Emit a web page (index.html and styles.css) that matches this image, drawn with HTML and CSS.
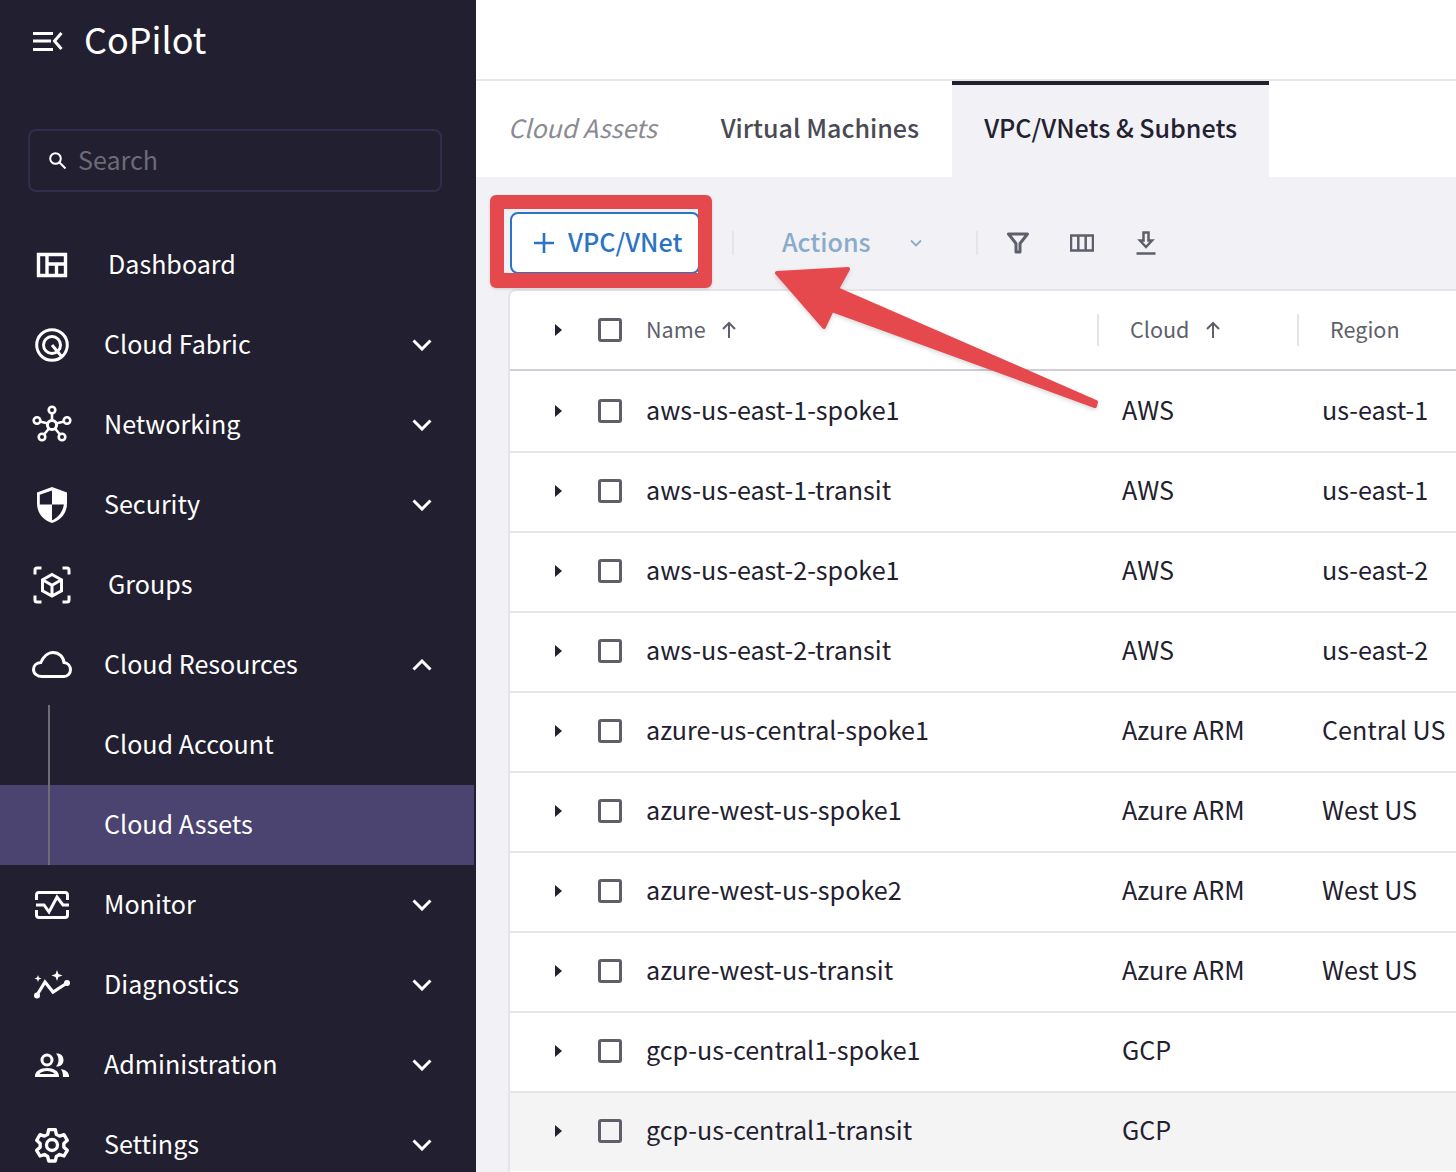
FILE: index.html
```html
<!doctype html>
<html lang="en">
  <head>
    <meta charset="UTF-8" />
    <meta name="viewport" content="width=device-width, initial-scale=1.0" />
    <title>CoPilot</title>
    <link rel="stylesheet" href="styles.css">
  </head>
  <body>
    <aside class="sidebar">
      <div class="brand">
        <svg class="brand-icon" viewBox="0 0 32 24" fill="none" stroke="#fff" stroke-width="3">
          <path d="M1 5.500h20M1 13h18M1 21.500h20" />
          <path d="M29.500 5l-7 8 7 8" stroke-width="3" />
        </svg>
        <span class="brand-name">CoPilot</span>
      </div>

      <div class="search">
        <svg class="search-icon" viewBox="0 0 17 17" fill="none" stroke="#fff" stroke-width="2">
          <circle cx="6.500" cy="6.500" r="5.300" />
          <path d="M10.500 10.500l6 6" />
        </svg>
        <span class="search-text">Search</span>
      </div>

      <nav class="nav">
        <a class="nav-item nav-item-wide">
          <svg class="nav-icon" viewBox="0 0 40 40" fill="none" stroke="#fff" stroke-width="3.400">
            <path d="M6.500 9.500h27v21h-27zM15 9.500v21M15 19h18.500M24.500 19v11.500" />
          </svg>
          <span>Dashboard</span>
        </a>
        <a class="nav-item">
          <svg class="nav-icon" viewBox="0 0 40 40" fill="none" stroke="#fff" stroke-width="3">
            <circle cx="20" cy="20" r="15.300" />
            <circle cx="20" cy="20" r="8.500" />
            <path d="M20 20l10 12" />
          </svg>
          <span>Cloud Fabric</span>
          <svg class="chevron" viewBox="0 0 20 12" fill="none" stroke="#fff" stroke-width="3"><path d="M1.500 1.500l8.500 8.500 8.500-8.500" /></svg>
        </a>
        <a class="nav-item">
          <svg class="nav-icon" viewBox="0 0 40 40" fill="none" stroke="#fff" stroke-width="2.600">
            <circle cx="20" cy="20" r="4.600" stroke-width="3" />
            <circle cx="20" cy="5" r="3.300" />
            <circle cx="5" cy="15.500" r="3.300" />
            <circle cx="35" cy="15.500" r="3.300" />
            <circle cx="10" cy="32" r="3.300" />
            <circle cx="30" cy="32" r="3.300" />
            <path d="M20 8.500v7M8 16.500l8 2M32 16.500l-8 2M12 29.500l5-6M28 29.500l-5-6" />
          </svg>
          <span>Networking</span>
          <svg class="chevron" viewBox="0 0 20 12" fill="none" stroke="#fff" stroke-width="3"><path d="M1.500 1.500l8.500 8.500 8.500-8.500" /></svg>
        </a>
        <a class="nav-item">
          <svg class="nav-icon" viewBox="0 0 40 40">
            <path fill="#fff" d="M20 2L5 7.500v11C5 28 11.500 35.500 20 38c8.500-2.500 15-10 15-19.500v-11z" />
            <path fill="#221f30" d="M20 5.500L7.800 9.800v9.700H20zM20 19.500v15.700c5.800-2.200 10.800-8.200 11.900-15.700z" />
          </svg>
          <span>Security</span>
          <svg class="chevron" viewBox="0 0 20 12" fill="none" stroke="#fff" stroke-width="3"><path d="M1.500 1.500l8.500 8.500 8.500-8.500" /></svg>
        </a>
        <a class="nav-item nav-item-wide">
          <svg class="nav-icon" viewBox="0 0 40 40" fill="none" stroke="#fff" stroke-width="3">
            <path d="M3 9.500V5q0-2 2-2h4.500M30.500 3H35q2 0 2 2v4.500M3 30.500V35q0 2 2 2h4.500M30.500 37H35q2 0 2-2v-4.500" />
            <path d="M20 9.500l9.500 5.300v11L20 31l-9.500-5.200v-11zM10.500 14.800l9.500 5.400 9.500-5.400M20 20.200V31" />
          </svg>
          <span>Groups</span>
        </a>
        <a class="nav-item">
          <svg class="nav-icon" viewBox="0 0 40 40" fill="none" stroke="#fff" stroke-width="3">
            <path d="M10 31.500c-4.500 0-8.500-2.800-8.500-7 0-4 3.200-6.800 7.300-7C11 12.500 15.500 7.500 21 7.500c6 0 10.500 4.500 11 10 3.800.5 6.500 3.500 6.500 7.300 0 3.700-3 6.700-6.500 6.700z" />
          </svg>
          <span>Cloud Resources</span>
          <svg class="chevron" viewBox="0 0 20 12" fill="none" stroke="#fff" stroke-width="3"><path d="M1.500 10.500l8.500-8.500 8.500 8.500" /></svg>
        </a>
        <div class="subnav">
          <a class="nav-item sub-item">Cloud Account</a>
          <a class="nav-item sub-item sub-item-active">Cloud Assets</a>
        </div>
        <a class="nav-item">
          <svg class="nav-icon" viewBox="0 0 40 40" fill="none" stroke="#fff" stroke-width="3">
            <path d="M4.500 15V10q0-2.500 2.500-2.500h26q2.500 0 2.500 2.500v5M4.500 25v5q0 2.500 2.500 2.500h26q2.500 0 2.500-2.500v-5" />
            <path d="M4 20h8l5 7 8-15 6 8h6" />
          </svg>
          <span>Monitor</span>
          <svg class="chevron" viewBox="0 0 20 12" fill="none" stroke="#fff" stroke-width="3"><path d="M1.500 1.500l8.500 8.500 8.500-8.500" /></svg>
        </a>
        <a class="nav-item">
          <svg class="nav-icon" viewBox="0 0 40 40" fill="none" stroke="#fff" stroke-width="3.200">
            <path d="M5 30l8-13 8 10 14-9" />
            <circle cx="5" cy="30.500" r="3" fill="#fff" stroke="none" />
            <circle cx="35" cy="18" r="3" fill="#fff" stroke="none" />
            <path fill="#fff" stroke="none" d="M25 5l1.400 4.100 4.100 1.400-4.100 1.400L25 16l-1.400-4.100-4.100-1.400 4.100-1.400zM6 10l.9 2.600 2.600.9-2.600.9L6 17l-.9-2.600-2.600-.9 2.600-.9z" />
          </svg>
          <span>Diagnostics</span>
          <svg class="chevron" viewBox="0 0 20 12" fill="none" stroke="#fff" stroke-width="3"><path d="M1.500 1.500l8.500 8.500 8.500-8.500" /></svg>
        </a>
        <a class="nav-item">
          <svg class="nav-icon" viewBox="0 0 40 40">
            <circle cx="15" cy="15" r="5" fill="none" stroke="#fff" stroke-width="3" />
            <path fill="#fff" d="M3 32v-1c0-5 5.500-8 12-8s12 3 12 8v1zm4.500-3h15c-1-1.600-4-3-7.500-3s-6.500 1.400-7.500 3z" />
            <path fill="#fff" d="M24 8.500c4.500-.5 7.500 2.200 7.500 6.500s-3 7-7.500 6.500c1.700-1.700 2.500-4 2.500-6.500s-.8-4.800-2.500-6.500zM29 24c4.500.8 8 3.300 8 7v1h-6c0-3-.5-5.500-2-8z" />
          </svg>
          <span>Administration</span>
          <svg class="chevron" viewBox="0 0 20 12" fill="none" stroke="#fff" stroke-width="3"><path d="M1.500 1.500l8.500 8.500 8.500-8.500" /></svg>
        </a>
        <a class="nav-item">
          <svg class="nav-icon" viewBox="0 0 24 24" fill="none" stroke="#fff" stroke-width="2" stroke-linejoin="round">
            <circle cx="12" cy="12" r="3.300" />
            <path d="M10 2.800h4l.6 2.800 1.900 1.100 2.700-.9 2 3.400-2.100 1.900v2.200l2.100 1.900-2 3.400-2.700-.9-1.900 1.100-.6 2.800h-4l-.6-2.800-1.900-1.100-2.700.9-2-3.400 2.100-1.900v-2.200L2.800 9.200l2-3.400 2.700.9 1.900-1.100z" />
          </svg>
          <span>Settings</span>
          <svg class="chevron" viewBox="0 0 20 12" fill="none" stroke="#fff" stroke-width="3"><path d="M1.500 1.500l8.500 8.500 8.500-8.500" /></svg>
        </a>
      </nav>
    </aside>

    <main class="content">
      <div class="topbar"></div>
      <div class="tabs">
        <a class="tab tab-crumb">Cloud Assets</a>
        <a class="tab tab-vm">Virtual Machines</a>
        <a class="tab tab-active">VPC/VNets &amp; Subnets</a>
      </div>

      <div class="panel">
        <div class="toolbar">
          <button class="add-button">
            <svg viewBox="0 0 20 20" fill="none" stroke="#2b74c4" stroke-width="2.600"><path d="M10 0v20M0 10h20" /></svg>
            <span class="add-label">VPC/VNet</span>
          </button>
          <span class="toolbar-sep sep-first"></span>
          <span class="actions">Actions</span>
          <svg class="actions-chevron" viewBox="0 0 12 8" fill="none" stroke="#8aabc9" stroke-width="1.800"><path d="M1 1.500l5 5 5-5" /></svg>
          <span class="toolbar-sep sep-second"></span>
          <svg class="tool-icon" viewBox="0 0 24 24" fill="none" stroke="#5f5f6b" stroke-width="3"><path d="M2.500 3h19L14 12.500V21h-4v-8.500z" stroke-linejoin="round" /></svg>
          <svg class="tool-icon" viewBox="0 0 24 24" fill="none" stroke="#5f5f6b" stroke-width="2.500"><path d="M1 4.500h22v15H1zM8.300 4.500v15M15.700 4.500v15" /></svg>
          <svg class="tool-icon" viewBox="0 0 24 24" fill="none" stroke="#5f5f6b" stroke-width="2.500"><path d="M9.500 1.500h5v8h3.500L12 16 6 9.500h3.500zM2.500 22.500h19" /></svg>
        </div>

        <div class="table">
          <div class="row row-head">
            <span class="caret"></span>
            <span class="checkbox"></span>
            <span class="cell-name head-name"><span class="head-label">Name</span><svg class="sort" viewBox="0 0 16 18" fill="none" stroke="#5f5f6b" stroke-width="2"><path d="M8 17V2M2 8l6-6 6 6" /></svg></span>
            <span class="cell-cloud head-cell"><span class="head-label">Cloud</span><svg class="sort" viewBox="0 0 16 18" fill="none" stroke="#5f5f6b" stroke-width="2"><path d="M8 17V2M2 8l6-6 6 6" /></svg></span>
            <span class="cell-region head-cell"><span class="head-label">Region</span></span>
          </div>
          <div class="row"><span class="caret"></span><span class="checkbox"></span><span class="cell-name">aws-us-east-1-spoke1</span><span class="cell-cloud">AWS</span><span class="cell-region">us-east-1</span></div>
          <div class="row"><span class="caret"></span><span class="checkbox"></span><span class="cell-name">aws-us-east-1-transit</span><span class="cell-cloud">AWS</span><span class="cell-region">us-east-1</span></div>
          <div class="row"><span class="caret"></span><span class="checkbox"></span><span class="cell-name">aws-us-east-2-spoke1</span><span class="cell-cloud">AWS</span><span class="cell-region">us-east-2</span></div>
          <div class="row"><span class="caret"></span><span class="checkbox"></span><span class="cell-name">aws-us-east-2-transit</span><span class="cell-cloud">AWS</span><span class="cell-region">us-east-2</span></div>
          <div class="row"><span class="caret"></span><span class="checkbox"></span><span class="cell-name">azure-us-central-spoke1</span><span class="cell-cloud">Azure ARM</span><span class="cell-region">Central US</span></div>
          <div class="row"><span class="caret"></span><span class="checkbox"></span><span class="cell-name">azure-west-us-spoke1</span><span class="cell-cloud">Azure ARM</span><span class="cell-region">West US</span></div>
          <div class="row"><span class="caret"></span><span class="checkbox"></span><span class="cell-name">azure-west-us-spoke2</span><span class="cell-cloud">Azure ARM</span><span class="cell-region">West US</span></div>
          <div class="row"><span class="caret"></span><span class="checkbox"></span><span class="cell-name">azure-west-us-transit</span><span class="cell-cloud">Azure ARM</span><span class="cell-region">West US</span></div>
          <div class="row"><span class="caret"></span><span class="checkbox"></span><span class="cell-name">gcp-us-central1-spoke1</span><span class="cell-cloud">GCP</span><span class="cell-region"></span></div>
          <div class="row row-hover"><span class="caret"></span><span class="checkbox"></span><span class="cell-name">gcp-us-central1-transit</span><span class="cell-cloud">GCP</span><span class="cell-region"></span></div>
        </div>
      </div>
    </main>

    <!-- red annotation drawn over the screenshot -->
    <div class="callout-box"></div>
    <svg class="callout-arrow" viewBox="0 0 1456 1172">
      <path fill="#e6494d" stroke="#e6494d" stroke-width="4" stroke-linejoin="round" d="M777 273L848 269 837 289 1096 402 1095 406 832 310 824 327z" />
    </svg>
  </body>
</html>
```

FILE: styles.css
```css
html, body {
  height: 100%;
}
body {
  margin: 0;
  padding: 0;
  display: flex;
  height: 1172px;
  overflow: hidden;
  font-family: "Noto Sans CJK SC", "Noto Sans", sans-serif;
  font-size: 25.100px;
  color: #23202f;
  background: #fff;
}

/* Sidebar */
.sidebar {
  width: 476px;
  flex-shrink: 0;
  background: #221f30;
  color: #fff;
}
.brand {
  display: flex;
  align-items: center;
  height: 80px;
  padding-left: 32px;
}
.brand-icon {
  width: 32px;
  height: 24px;
}
.brand-name {
  margin-left: 20px;
  padding-bottom: 4px;
  font-size: 36px;
  line-height: 1;
}
.search {
  display: flex;
  align-items: center;
  height: 63px;
  margin: 49px 34px 0 28px;
  padding-left: 19px;
  box-sizing: border-box;
  border: 2px solid #322d4a;
  border-radius: 8px;
  color: #6d6a78;
}
.search-icon {
  width: 17px;
  height: 17px;
  margin-right: 12px;
}
.search-text {
  padding-bottom: 4px;
}
.nav {
  margin-top: 33px;
}
.nav-item {
  display: flex;
  align-items: center;
  height: 80px;
  padding-left: 32px;
  padding-right: 44px;
  box-sizing: border-box;
}
.nav-item span {
  padding-bottom: 4px;
}
.nav-icon {
  width: 40px;
  height: 40px;
  flex-shrink: 0;
  margin-right: 32px;
}
.nav-item-wide .nav-icon {
  margin-right: 36px;
}
.chevron {
  width: 20px;
  height: 12px;
  margin-left: auto;
}
.subnav {
  position: relative;
}
.subnav::before {
  content: '';
  position: absolute;
  left: 48px;
  top: 0;
  bottom: 0;
  width: 2px;
  background: #6f6c78;
  z-index: 1;
}
.sub-item {
  padding-left: 104px;
  padding-bottom: 4px;
}
.sub-item-active {
  background: #4c4470;
  margin-right: 2px;
}

/* Main area */
.content {
  flex: 1;
  min-width: 0;
}
.topbar {
  height: 79px;
  border-bottom: 2px solid #e6e6eb;
}
.tabs {
  display: flex;
  height: 96px;
}
.tab {
  display: flex;
  align-items: center;
  padding: 0 32px 4px;
  font-weight: 500;
  color: #4a4a55;
}
.tab-crumb {
  padding: 0 32px 4px 32px;
  font-style: italic;
  font-weight: 400;
  color: #8a8a92;
}
.tab-vm {
  padding-right: 33px;
}
.tab-active {
  background: #f1f1f6;
  color: #23202f;
  border-top: 4px solid #23202f;
  padding: 0 32px 8px;
}
.panel {
  background: #f1f1f6;
  height: 995px;
  padding-left: 32px;
}
.toolbar {
  display: flex;
  align-items: center;
  height: 112px;
  padding-top: 20px;
  box-sizing: border-box;
  color: #5f5f6b;
}
.add-button {
  display: flex;
  align-items: center;
  width: 190px;
  height: 62px;
  margin-left: 2px;
  padding: 0 0 0 22px;
  background: #fff;
  border: 2px solid #2b74c4;
  border-radius: 8px;
  font: inherit;
  font-weight: 500;
  color: #2b74c4;
}
.add-button svg {
  width: 20px;
  height: 20px;
  margin-right: 14px;
}
.add-label {
  padding-bottom: 4px;
}
.toolbar-sep {
  width: 2px;
  height: 24px;
  background: #e4e4ea;
}
.sep-first {
  margin-left: 32px;
}
.actions {
  margin-left: 48px;
  padding-bottom: 4px;
  font-weight: 500;
  color: #8aabc9;
}
.actions-chevron {
  width: 12px;
  height: 8px;
  margin-left: 39px;
}
.sep-second {
  margin-left: 54px;
}
.tool-icon {
  width: 24px;
  height: 24px;
  margin-left: 40px;
}
.sep-second + .tool-icon {
  margin-left: 28px;
}

/* Table */
.table {
  background: #fff;
  border-top: 2px solid #e4e4ea;
  border-left: 2px solid #e4e4ea;
  border-top-left-radius: 8px;
  height: 900px;
}
.row {
  display: flex;
  align-items: center;
  height: 80px;
  box-sizing: border-box;
  border-top: 2px solid #e4e4ea;
  padding-left: 44px;
  padding-bottom: 2px;
}
.row-head {
  height: 78px;
  border-top: 0;
  padding-bottom: 0;
  color: #5f5f6b;
  font-size: 21.600px;
}
.row + .row:nth-child(2) {
  height: 82px;
  padding-bottom: 0;
  border-top-color: #cfcfd8;
}
.row-hover {
  background: #f4f4f5;
}
.caret {
  width: 0;
  height: 0;
  border-top: 6px solid transparent;
  border-bottom: 6px solid transparent;
  border-left: 7px solid #23202f;
  margin-left: 1px;
  margin-right: 36px;
}
.checkbox {
  width: 24px;
  height: 24px;
  box-sizing: border-box;
  border: 3px solid #5f5f6b;
  border-radius: 3px;
  margin-right: 24px;
}
.cell-name {
  width: 476px;
  flex-shrink: 0;
  padding-bottom: 4px;
  white-space: nowrap;
}
.cell-cloud {
  width: 200px;
  flex-shrink: 0;
  padding-bottom: 4px;
  white-space: nowrap;
}
.cell-region {
  padding-bottom: 4px;
  white-space: nowrap;
}
.head-name, .head-cell {
  display: flex;
  align-items: center;
  height: 32px;
  padding-bottom: 0;
}
.head-label {
  padding-bottom: 4px;
}
.head-cell {
  position: relative;
  left: 8px;
}
.head-cell::before {
  content: '';
  position: absolute;
  left: -33px;
  top: 0;
  width: 2px;
  height: 32px;
  background: #e4e4ea;
}
.sort {
  width: 16px;
  height: 18px;
  margin-left: 15px;
}

/* Annotation */
.callout-box {
  position: absolute;
  left: 490px;
  top: 195px;
  width: 222px;
  height: 93px;
  box-sizing: border-box;
  border-style: solid;
  border-color: #e6494d;
  border-width: 14px 14px 15px 14px;
  border-radius: 6px;
  box-shadow: 0 1px 3px rgba(0, 0, 0, 0.15);
}
.callout-arrow {
  position: absolute;
  left: 0;
  top: 0;
  width: 1456px;
  height: 1172px;
  pointer-events: none;
  filter: drop-shadow(0 2px 2px rgba(0, 0, 0, 0.15));
}
```
